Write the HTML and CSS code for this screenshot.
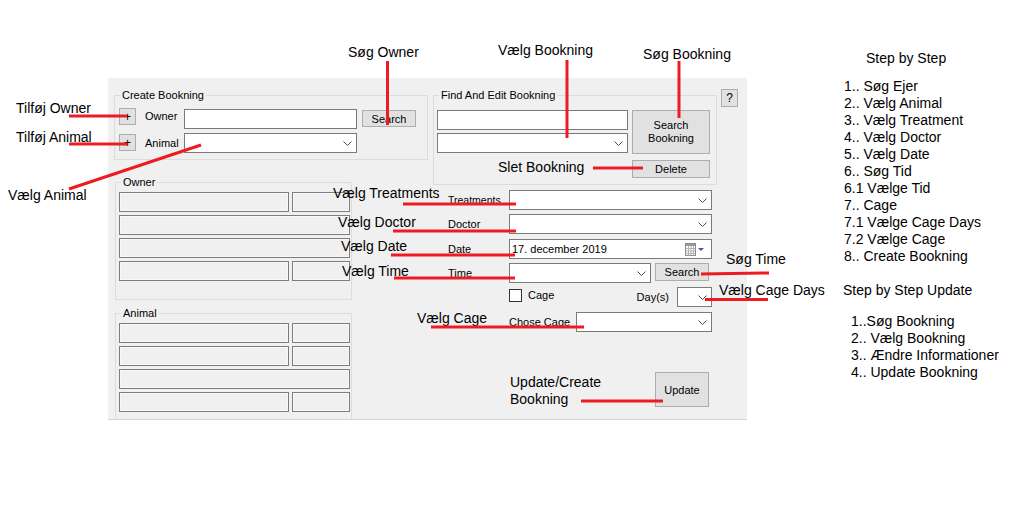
FILE: index.html
```html
<!DOCTYPE html>
<html>
<head>
<meta charset="utf-8">
<title>Bookning</title>
<link rel="stylesheet" href="styles.css">
</head>
<body>
<div class="page">
  <div class="form">
    <div class="col-left">
      <div class="group create">
        <span class="legend">Create Bookning</span>
        <div class="crow crow1">
          <div class="btn plus">+</div>
          <span class="clabel">Owner</span>
          <div class="textbox owner-box"></div>
          <div class="btn search-owner">Search</div>
        </div>
        <div class="crow crow2">
          <div class="btn plus plus2">+</div>
          <span class="clabel clabel2">Animal</span>
          <div class="combo animal-combo"><svg class="chev" width="9" height="5" viewBox="0 0 9 5"><polyline points="0.5,0.5 4.5,4.5 8.5,0.5"/></svg></div>
        </div>
      </div>
      <div class="group info owner-group">
        <span class="legend">Owner</span>
        <div class="info-row"><div class="ro wide"></div><div class="ro narrow"></div></div>
        <div class="info-row"><div class="ro full"></div></div>
        <div class="info-row"><div class="ro full"></div></div>
        <div class="info-row"><div class="ro wide"></div><div class="ro narrow"></div></div>
      </div>
      <div class="group info animal-group">
        <span class="legend">Animal</span>
        <div class="info-row"><div class="ro wide"></div><div class="ro narrow"></div></div>
        <div class="info-row"><div class="ro wide"></div><div class="ro narrow"></div></div>
        <div class="info-row"><div class="ro full"></div></div>
        <div class="info-row"><div class="ro wide"></div><div class="ro narrow"></div></div>
      </div>
    </div>
    <div class="col-right">
      <div class="top-row">
        <div class="group find">
          <span class="legend">Find And Edit Bookning</span>
          <div class="find-body">
            <div class="find-inputs">
              <div class="textbox find-box"></div>
              <div class="combo find-combo"><svg class="chev" width="9" height="5" viewBox="0 0 9 5"><polyline points="0.5,0.5 4.5,4.5 8.5,0.5"/></svg></div>
            </div>
            <div class="find-buttons">
              <div class="btn search-bk">Search<br>Bookning</div>
              <div class="btn delete">Delete</div>
            </div>
          </div>
        </div>
        <div class="btn help">?</div>
      </div>
      <div class="fields">
        <div class="frow r-treat">
          <span class="flabel small">Treatments</span>
          <div class="combo fcombo"><svg class="chev" width="9" height="5" viewBox="0 0 9 5"><polyline points="0.5,0.5 4.5,4.5 8.5,0.5"/></svg></div>
        </div>
        <div class="frow r-doctor">
          <span class="flabel">Doctor</span>
          <div class="combo fcombo"><svg class="chev" width="9" height="5" viewBox="0 0 9 5"><polyline points="0.5,0.5 4.5,4.5 8.5,0.5"/></svg></div>
        </div>
        <div class="frow r-date">
          <span class="flabel">Date</span>
          <div class="datepick">
            <span class="date-text">17. december 2019</span>
            <svg class="cal" width="19" height="13" viewBox="0 0 19 13">
              <rect x="0.5" y="0.5" width="10" height="12" fill="#fdfdfd" stroke="#8c8c8c"/>
              <rect x="1" y="1" width="9" height="2" fill="#9a9a9a"/>
              <path d="M1 5.5H10M1 8H10M1 10.5H10M3.5 3V12.5M6 3V12.5M8.5 3V12.5" stroke="#b4b4b4" fill="none"/>
              <polygon points="13,5 19,5 16,8" fill="#3d5b8c"/>
            </svg>
          </div>
        </div>
        <div class="frow r-time">
          <span class="flabel">Time</span>
          <div class="combo time-combo"><svg class="chev" width="9" height="5" viewBox="0 0 9 5"><polyline points="0.5,0.5 4.5,4.5 8.5,0.5"/></svg></div>
          <div class="btn time-search">Search</div>
        </div>
        <div class="frow r-cage">
          <span class="flabel"></span>
          <span class="checkbox"></span>
          <span class="cage-label">Cage</span>
          <span class="days-label">Day(s)</span>
          <div class="combo day-combo"><svg class="chev" width="9" height="5" viewBox="0 0 9 5"><polyline points="0.5,0.5 4.5,4.5 8.5,0.5"/></svg></div>
        </div>
        <div class="frow r-chose">
          <span class="flabel"></span>
          <span class="chose-label">Chose Cage</span>
          <div class="combo chose-combo"><svg class="chev" width="9" height="5" viewBox="0 0 9 5"><polyline points="0.5,0.5 4.5,4.5 8.5,0.5"/></svg></div>
        </div>
        <div class="btn update">Update</div>
      </div>
    </div>
  </div>

  <aside class="steps">
    <div class="steps-title">Step by Step</div>
    <div class="steps-list">
      <div>1.. Søg Ejer</div>
      <div>2.. Vælg Animal</div>
      <div>3.. Vælg Treatment</div>
      <div>4.. Vælg Doctor</div>
      <div>5.. Vælg Date</div>
      <div>6.. Søg Tid</div>
      <div>6.1 Vælge Tid</div>
      <div>7.. Cage</div>
      <div>7.1 Vælge Cage Days</div>
      <div>7.2 Vælge Cage</div>
      <div>8.. Create Bookning</div>
    </div>
    <div class="update-title">Step by Step Update</div>
    <div class="update-list">
      <div>1..Søg Bookning</div>
      <div>2.. Vælg Bookning</div>
      <div>3.. Ændre Informationer</div>
      <div>4.. Update Bookning</div>
    </div>
  </aside>

  <div class="notes">
    <span class="note n1">Søg Owner</span>
    <span class="note n2">Vælg Bookning</span>
    <span class="note n3">Søg Bookning</span>
    <span class="note n4">Tilføj Owner</span>
    <span class="note n5">Tilføj Animal</span>
    <span class="note n6">Vælg Animal</span>
    <span class="note n7">Slet Bookning</span>
    <span class="note n8">Vælg Treatments</span>
    <span class="note n9">Vælg Doctor</span>
    <span class="note n10">Vælg Date</span>
    <span class="note n11">Vælg Time</span>
    <span class="note n12">Søg Time</span>
    <span class="note n13">Vælg Cage Days</span>
    <span class="note n14">Vælg Cage</span>
    <span class="note n15">Update/Create<br>Bookning</span>
    <svg class="lines" width="1018" height="513" viewBox="0 0 1018 513">
      <g stroke="#ed1c24" stroke-width="3" fill="none">
        <line x1="387.5" y1="61" x2="387.5" y2="125"/>
        <line x1="69" y1="116" x2="127" y2="116"/>
        <line x1="69" y1="144" x2="127" y2="144"/>
        <line x1="69" y1="189" x2="201" y2="145"/>
        <line x1="567" y1="60" x2="567" y2="138"/>
        <line x1="679" y1="61" x2="679" y2="118"/>
        <line x1="593" y1="168" x2="643" y2="168"/>
        <line x1="403" y1="204" x2="516" y2="204"/>
        <line x1="393" y1="231" x2="516" y2="231"/>
        <line x1="391" y1="255" x2="515" y2="255"/>
        <line x1="394" y1="278" x2="515" y2="278"/>
        <line x1="701" y1="274" x2="769" y2="273"/>
        <line x1="705" y1="299.5" x2="768" y2="299.5"/>
        <line x1="431" y1="327" x2="584" y2="327"/>
        <line x1="581" y1="401" x2="663" y2="401"/>
      </g>
    </svg>
  </div>
</div>
</body>
</html>
```
FILE: styles.css
```css
html, body {
  margin: 0;
  padding: 0;
  background: #fff;
}

body {
  font-family: "Liberation Sans", Arial, sans-serif;
  color: #000;
}

.page {
  position: relative;
  width: 1018px;
  height: 513px;
  display: flex;
  align-items: flex-start;
  overflow: hidden;
  background: #fff;
}

/* ---------- WinForms panel ---------- */
.form {
  margin: 78px 0 0 108px;
  width: 639px;
  height: 342px;
  box-sizing: border-box;
  background: #f0f0f0;
  border-bottom: 1px solid #c6d6e6;
  display: flex;
  overflow: hidden;
  flex-shrink: 0;
  font-size: 11px;
}

.col-left {
  width: 320px;
  padding: 17px 0 0 6px;
  box-sizing: border-box;
  flex-shrink: 0;
  display: flex;
  flex-direction: column;
  align-items: flex-start;
}

.col-right {
  width: 314px;
  margin-left: 5px;
  flex-shrink: 0;
}

.group {
  position: relative;
  border: 1px solid #dcdcdc;
  box-sizing: border-box;
  flex-shrink: 0;
}

.legend {
  position: absolute;
  top: -8px;
  left: 5px;
  padding: 0 2px;
  background: #f0f0f0;
  font-size: 11px;
  line-height: 14px;
  white-space: nowrap;
}

.btn {
  background: #e1e1e1;
  border: 1px solid #adadad;
  box-sizing: border-box;
  font-size: 11px;
  display: flex;
  align-items: center;
  justify-content: center;
  text-align: center;
  flex-shrink: 0;
}

.textbox {
  background: #fff;
  border: 1px solid #7a7a7a;
  box-sizing: border-box;
  flex-shrink: 0;
}

.combo {
  background: #fff;
  border: 1px solid #7a7a7a;
  box-sizing: border-box;
  display: flex;
  align-items: center;
  justify-content: flex-end;
  padding-right: 4px;
  flex-shrink: 0;
}

.chev polyline {
  fill: none;
  stroke: #4d4d4d;
  stroke-width: 1;
}

/* Create group */
.create {
  width: 314px;
  height: 65px;
  padding: 12px 0 0 4px;
}

.crow {
  display: flex;
  align-items: flex-start;
}

.crow1 { height: 25px; }
.crow2 { height: 20px; }

.plus {
  width: 17px;
  height: 17px;
  font-size: 12px;
  line-height: 1;
}

.plus2 { margin-top: 1px; }

.clabel {
  width: 48px;
  padding-left: 9px;
  box-sizing: border-box;
  line-height: 17px;
  flex-shrink: 0;
}

.clabel2 { margin-top: 2px; }

.owner-box {
  width: 173px;
  height: 20px;
  margin-top: 1px;
}

.search-owner {
  width: 54px;
  height: 17px;
  margin: 2px 0 0 5px;
}

.animal-combo {
  width: 173px;
  height: 20px;
}

/* Owner / Animal info groups */
.info {
  width: 237px;
  padding: 9px 0 0 3px;
  margin-left: 1px;
}

.owner-group {
  margin-top: 22px;
  height: 118px;
}

.animal-group {
  margin-top: 13px;
  height: 120px;
}

.info-row {
  display: flex;
  gap: 3px;
  margin-bottom: 3px;
}

.ro {
  height: 20px;
  border: 1px solid #7d7d7d;
  box-sizing: border-box;
  background: #f0f0f0;
  box-shadow: inset 0 0 0 1px #f8f8f8;
}

.wide { width: 170px; }
.narrow { width: 58px; }
.full { width: 231px; }

/* Find group */
.top-row {
  display: flex;
  align-items: flex-start;
  padding-top: 11px;
}

.find {
  margin-top: 6px;
  width: 284px;
  height: 90px;
  padding: 14px 0 0 3px;
}

.help {
  width: 17px;
  height: 18px;
  margin-left: 4px;
  font-size: 12px;
}

.find-body { display: flex; }

.find-inputs {
  display: flex;
  flex-direction: column;
  gap: 3px;
}

.find-box, .find-combo {
  width: 191px;
  height: 20px;
}

.find-buttons {
  margin-left: 4px;
  display: flex;
  flex-direction: column;
  gap: 6px;
}

.search-bk {
  width: 78px;
  height: 44px;
  line-height: 13px;
}

.delete {
  width: 78px;
  height: 18px;
}

/* Booking fields */
.fields {
  padding-left: 15px;
  margin-top: 5px;
}

.frow {
  display: flex;
  align-items: flex-start;
}

.flabel {
  width: 61px;
  line-height: 20px;
  flex-shrink: 0;
  white-space: nowrap;
}

.flabel.small { font-size: 10.5px; }

.fcombo {
  width: 203px;
  height: 20px;
}

.r-doctor { margin-top: 4px; }
.r-date { margin-top: 5px; }
.r-time { margin-top: 4px; }
.r-cage { margin-top: 4px; width: 264px; }
.r-chose { margin-top: 5px; }

.datepick {
  width: 203px;
  height: 20px;
  background: #fff;
  border: 1px solid #7a7a7a;
  box-sizing: border-box;
  display: flex;
  align-items: center;
  justify-content: space-between;
  padding: 0 7px 0 2px;
}

.date-text {
  font-size: 11px;
  white-space: nowrap;
}

.cal { display: block; }

.time-combo {
  width: 142px;
  height: 20px;
}

.time-search {
  width: 54px;
  height: 18px;
  margin-left: 4px;
}

.checkbox {
  width: 13px;
  height: 13px;
  margin-top: 2px;
  border: 1px solid #333;
  box-sizing: border-box;
  background: #fff;
  flex-shrink: 0;
}

.cage-label {
  margin-left: 6px;
  line-height: 16px;
}

.days-label {
  margin-left: auto;
  line-height: 20px;
}

.day-combo {
  width: 35px;
  height: 20px;
  margin-left: 8px;
}

.chose-label {
  width: 67px;
  line-height: 20px;
  flex-shrink: 0;
  white-space: nowrap;
}

.chose-combo {
  width: 136px;
  height: 20px;
}

.update {
  width: 54px;
  height: 35px;
  margin: 40px 0 0 207px;
}

/* ---------- Step by step side text ---------- */
.steps {
  margin: 50px 0 0 96px;
  font-size: 14px;
  line-height: 17px;
  flex-shrink: 0;
  white-space: nowrap;
}

.steps-title { margin-left: 23px; }

.steps-list { margin: 11px 0 0 1px; }

.update-title { margin-top: 17px; }

.update-list { margin: 14px 0 0 8px; }

/* ---------- Annotation overlay ---------- */
.notes {
  position: absolute;
  left: 0;
  top: 0;
  width: 1018px;
  height: 513px;
  pointer-events: none;
}

.note {
  position: absolute;
  font-size: 14px;
  line-height: 16px;
  white-space: nowrap;
  color: #000;
}

.lines {
  position: absolute;
  left: 0;
  top: 0;
}

.n1 { left: 348px; top: 44px; }
.n2 { left: 498px; top: 42px; }
.n3 { left: 643px; top: 46px; }
.n4 { left: 16px; top: 100px; }
.n5 { left: 16px; top: 129px; }
.n6 { left: 8px; top: 187px; }
.n7 { left: 498px; top: 159px; }
.n8 { left: 333px; top: 185px; }
.n9 { left: 338px; top: 214px; }
.n10 { left: 341px; top: 238px; }
.n11 { left: 342px; top: 263px; }
.n12 { left: 726px; top: 251px; }
.n13 { left: 719px; top: 282px; }
.n14 { left: 417px; top: 310px; }
.n15 { left: 510px; top: 374px; line-height: 17px; }
```
